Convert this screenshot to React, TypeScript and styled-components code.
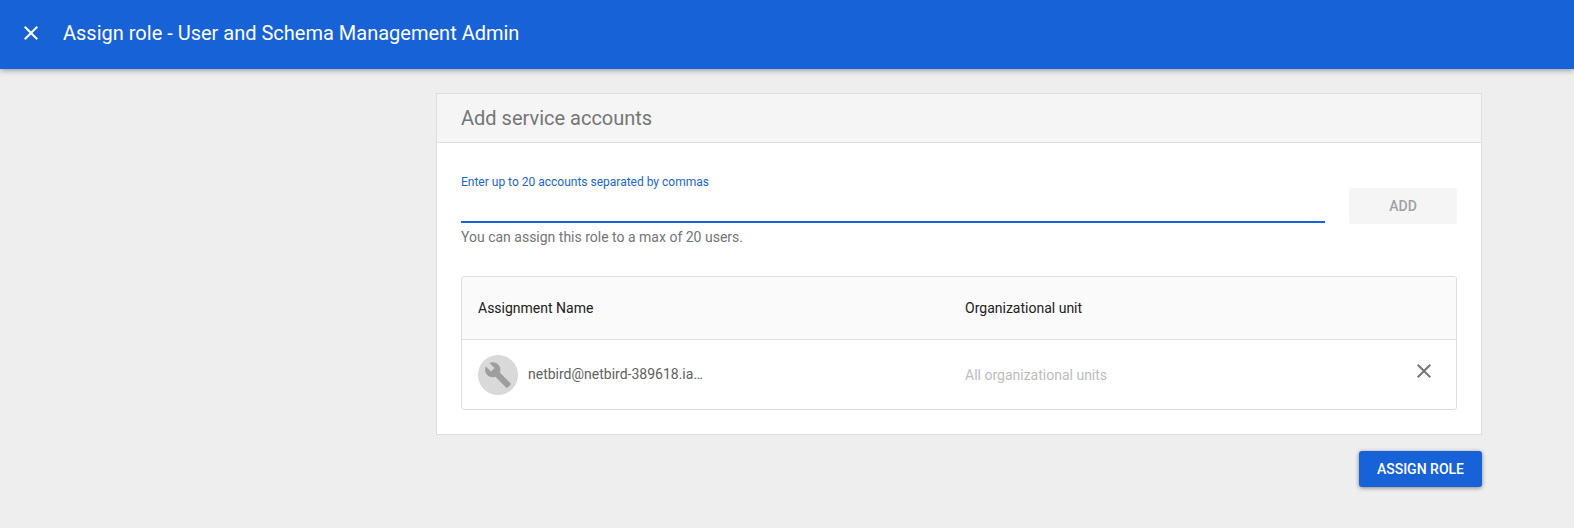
import React, { useState } from "react";
import styled, { createGlobalStyle } from "styled-components";
import { MdBuild, MdClose } from "react-icons/md";

const GlobalStyle = createGlobalStyle`
  *, *::before, *::after {
    box-sizing: border-box;
  }
  body {
    margin: 0;
    background: #eee;
    color: #212121;
    font-family: Roboto, "Liberation Sans", sans-serif;
    font-size: 14px;
    line-height: 20px;
  }
  button, input {
    font: inherit;
  }
`;

const TopBar = styled.header`
  position: relative;
  display: flex;
  align-items: center;
  gap: 20px;
  min-height: 69px;
  padding: 0 19px 4px;
  background: #1862d8;
  color: #fff;
  box-shadow: 0 1px 6px rgba(0, 0, 0, 0.4);
`;

const IconButton = styled.button`
  display: inline-flex;
  padding: 0;
  border: 0;
  background: none;
  color: inherit;
  cursor: pointer;
`;

const PageTitle = styled.h1`
  margin: 0;
  font-size: 20px;
  font-weight: 400;
  line-height: 24px;
`;

const Main = styled.main`
  display: flex;
  flex-direction: column;
  align-items: flex-end;
  gap: 16px;
  padding: 24px 92px 40px 436px;
`;

const Card = styled.section`
  width: 100%;
  border: 1px solid #dedede;
  background: #fff;
`;

const CardHeader = styled.div`
  padding: 12px 24px;
  border-bottom: 1px solid #dedede;
  background: #f5f5f5;
`;

const CardTitle = styled.h2`
  margin: 0;
  color: #757575;
  font-size: 20px;
  font-weight: 400;
  line-height: 24px;
`;

const CardBody = styled.div`
  padding: 29px 24px 24px;
`;

const EntryForm = styled.form`
  display: flex;
  align-items: flex-start;
  gap: 24px;
  margin-bottom: 29px;
`;

const Field = styled.div`
  display: flex;
  flex: 1;
  flex-direction: column;
  min-width: 0;
`;

const FieldLabel = styled.label`
  color: #1967d2;
  font-size: 12px;
`;

const FieldInput = styled.input`
  height: 31px;
  padding: 0;
  border: 0;
  border-bottom: 2px solid #1862d8;
  outline: 0;
  background: none;
  caret-color: transparent;
`;

const FieldHint = styled.span`
  padding-top: 4px;
  color: #757575;
`;

const ActionButton = styled.button<{ $primary?: boolean }>`
  height: 36px;
  min-width: 108px;
  margin-top: ${({ $primary }) => ($primary ? "0" : "16px")};
  padding: 0 18px;
  border: 0;
  border-radius: 3px;
  background: ${({ $primary }) => ($primary ? "#1862d8" : "#f5f5f5")};
  box-shadow: ${({ $primary }) => ($primary ? "0 1px 4px rgba(0, 0, 0, 0.45)" : "none")};
  color: ${({ $primary }) => ($primary ? "#fff" : "#a1a1a1")};
  font-weight: 500;
  text-transform: uppercase;
`;

const TableFrame = styled.div`
  overflow: hidden;
  border: 1px solid #dedede;
  border-radius: 3px;
`;

const Table = styled.table`
  width: 100%;
  border-collapse: separate;
  border-spacing: 0;
  table-layout: fixed;
  text-align: left;
`;

const HeadCell = styled.th`
  height: 63px;
  padding: 0 16px;
  border-bottom: 1px solid #dedede;
  background: #fafafa;
  font-weight: 400;

  &:first-child {
    width: 49%;
  }
  &:last-child {
    width: 64px;
  }
`;

const Cell = styled.td<{ $muted?: boolean }>`
  height: 69px;
  padding: 0 16px;
  color: ${({ $muted }) => ($muted ? "#bdbdbd" : "#616161")};
`;

const Account = styled.div`
  display: flex;
  align-items: center;
  gap: 10px;
`;

const Avatar = styled.span`
  display: grid;
  flex: none;
  place-items: center;
  width: 40px;
  height: 40px;
  border-radius: 50%;
  background: #d9d9d9;
  color: #9e9e9e;
`;

const AccountName = styled.span`
  overflow: hidden;
  max-width: 180px;
  padding-bottom: 2px;
  text-overflow: ellipsis;
  white-space: nowrap;
`;

const RemoveCell = styled(Cell)`
  padding: 0 20px 8px 0;
  text-align: right;
  color: #757575;
  line-height: 0;
`;

const accounts = [{ name: "netbird@netbird-389618.ia…", unit: "All organizational units" }];

export default function App() {
  const [entry, setEntry] = useState("");

  return (
    <>
      <GlobalStyle />
      <TopBar>
        <IconButton type="button" aria-label="Close">
          <MdClose size={24} />
        </IconButton>
        <PageTitle>Assign role - User and Schema Management Admin</PageTitle>
      </TopBar>
      <Main>
        <Card>
          <CardHeader>
            <CardTitle>Add service accounts</CardTitle>
          </CardHeader>
          <CardBody>
            <EntryForm onSubmit={(event) => event.preventDefault()}>
              <Field>
                <FieldLabel htmlFor="accounts">Enter up to 20 accounts separated by commas</FieldLabel>
                <FieldInput
                  id="accounts"
                  aria-describedby="accounts-hint"
                  value={entry}
                  onChange={(event) => setEntry(event.target.value)}
                />
                <FieldHint id="accounts-hint">You can assign this role to a max of 20 users.</FieldHint>
              </Field>
              <ActionButton type="submit" disabled={!entry}>
                Add
              </ActionButton>
            </EntryForm>
            <TableFrame>
              <Table>
                <thead>
                  <tr>
                    <HeadCell scope="col">Assignment Name</HeadCell>
                    <HeadCell scope="col">Organizational unit</HeadCell>
                    <HeadCell scope="col" aria-label="Actions" />
                  </tr>
                </thead>
                <tbody>
                  {accounts.map((account) => (
                    <tr key={account.name}>
                      <Cell>
                        <Account>
                          <Avatar>
                            <MdBuild size={28} aria-hidden />
                          </Avatar>
                          <AccountName>{account.name}</AccountName>
                        </Account>
                      </Cell>
                      <Cell $muted>{account.unit}</Cell>
                      <RemoveCell>
                        <IconButton type="button" aria-label={`Remove ${account.name}`}>
                          <MdClose size={24} />
                        </IconButton>
                      </RemoveCell>
                    </tr>
                  ))}
                </tbody>
              </Table>
            </TableFrame>
          </CardBody>
        </Card>
        <ActionButton $primary type="button">
          Assign role
        </ActionButton>
      </Main>
    </>
  );
}
